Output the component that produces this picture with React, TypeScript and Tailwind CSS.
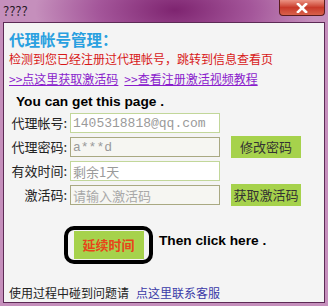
import React from 'react';

const cjk = { fontFamily: '"Noto Sans CJK SC", "Liberation Sans", sans-serif' };
const mono = { fontFamily: '"Liberation Mono", "Noto Sans CJK SC", monospace' };
const latinBold = { fontFamily: '"Liberation Sans", Arial, sans-serif' };

type Row = { label: string; value: string; placeholder?: boolean; monoText?: boolean; light: boolean; button?: string };

const rows: Row[] = [
  { label: '代理帐号:', value: '1405318818@qq.com', monoText: true, light: true },
  { label: '代理密码:', value: 'a***d', monoText: true, light: false, button: '修改密码' },
  { label: '有效时间:', value: '剩余1天', light: true },
  { label: '激活码:', value: '请输入激活码', placeholder: true, light: false, button: '获取激活码' },
];

const App: React.FC = () => {
  return (
    <div
      className="w-[328px] h-[306px] flex flex-col overflow-hidden"
      style={{ background: 'radial-gradient(ellipse 140px 60px at 175px 10px, #7e2470 0%, #a4569a 55%, #c58fbc 100%)' }}
    >
      {/* title bar */}
      <div className="h-[23px] flex items-start justify-between pl-[3px] pr-[3px]">
        <span className="text-[13px] leading-[14px] mt-[4px] text-[#2a1a28]" style={cjk}>????</span>
        <div className="w-[46px] h-[16px] rounded-b-[4px] border border-t-0 border-[#5a1c1c] flex items-center justify-center bg-gradient-to-b from-[#eb9284] via-[#c8392a] to-[#d8604a]">
          <svg width="12" height="10" viewBox="0 0 12 10">
            <path d="M2 1 L10 9 M10 1 L2 9" stroke="#ffffff" strokeWidth="2.6" strokeLinecap="square" />
          </svg>
        </div>
      </div>

      {/* content */}
      <div className="mx-[3px] mb-[3px] flex-1 border border-[#5c2a55] bg-[#f4f4f4] flex flex-col pl-[5px]" style={cjk}>
        <div className="mt-[6px] h-[20px] leading-[20px] text-[15.5px] font-bold text-[#2aa0e0]">代理帐号管理：</div>
        <div className="h-[18px] leading-[18px] mt-[1px] text-[12px] text-[#d81818]">检测到您已经注册过代理帐号，跳转到信息查看页</div>
        <div className="h-[18px] leading-[18px] mt-[2px] text-[12px] text-[#8a1ccc] flex gap-[6px]">
          <span className="underline">&gt;&gt;点这里获取激活码</span>
          <span className="underline">&gt;&gt;查看注册激活视频教程</span>
        </div>
        <div className="h-[18px] leading-[18px] mt-[5px] ml-[7px] text-[13.7px] font-bold text-black" style={latinBold}>
          You can get this page .
        </div>

        <div className="mt-[2px] flex flex-col gap-[4px]">
          {rows.map((r) => (
            <div key={r.label} className="h-[20px] flex items-center">
              <span className="w-[58px] text-right text-[13px] text-[#222]">{r.label}</span>
              <div
                className={`ml-[3px] w-[150px] h-[20px] border flex items-center pl-[2px] ${
                  r.light ? 'border-[#c2d79a] bg-white' : 'border-[#a9a982] bg-[#f6f6f2]'
                }`}
              >
                <span
                  className={`text-[13px] leading-none ${r.placeholder ? 'text-[#a8a8a8]' : 'text-[#9a9a9a]'}`}
                  style={r.monoText ? mono : cjk}
                >
                  {r.value}
                </span>
              </div>
              {r.button && (
                <div className="ml-[11px] w-[70px] h-[22px] bg-[#a6d24c] flex items-center justify-center text-[13px] text-[#333]">
                  {r.button}
                </div>
              )}
            </div>
          ))}
        </div>

        <div className="mt-[21px] ml-[55px] flex items-start">
          <div className="w-[89px] h-[38px] border-[4px] border-black rounded-[10px] flex items-center justify-center">
            <div className="w-[70px] h-[28px] bg-[#a6d24c] flex items-center justify-center text-[13px] font-bold text-[#e8441a]">
              延续时间
            </div>
          </div>
          <span className="ml-[6px] mt-[7px] text-[13.7px] font-bold text-black leading-[16px]" style={latinBold}>
            Then click here .
          </span>
        </div>

        <div className="mt-[20px] h-[18px] leading-[18px] text-[12px] flex">
          <span className="text-[#222]">使用过程中碰到问题请</span>
          <span className="ml-[7px] text-[#3a3aa8]">点这里联系客服</span>
        </div>
      </div>
    </div>
  );
};

export default App;
